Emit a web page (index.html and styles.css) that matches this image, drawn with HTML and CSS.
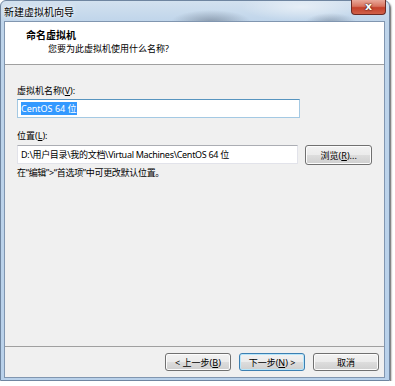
FILE: index.html
```html
<!DOCTYPE html>
<html lang="zh-CN">
<head>
  <meta charset="UTF-8" />
  <title>新建虚拟机向导</title>
  <link rel="stylesheet" href="styles.css">
</head>
<body>
  <div class="window">
    <div class="titlebar">
      <span class="title">新建虚拟机向导</span>
      <button class="close">x</button>
    </div>

    <div class="client">
      <div class="header">
        <div class="heading">命名虚拟机</div>
        <div class="subheading">您要为此虚拟机使用什么名称?</div>
      </div>

      <div class="content">
        <div class="label">虚拟机名称(<u>V</u>):</div>
        <div class="field focused"><span class="selected">CentOS 64 位</span></div>

        <div class="label second">位置(<u>L</u>):</div>
        <div class="row">
          <div class="field">D:\用户目录\我的文档\Virtual Machines\CentOS 64 位</div>
          <button class="btn browse">浏览(<u>R</u>)...</button>
        </div>
        <div class="note">在“编辑”>“首选项”中可更改默认位置。</div>
      </div>

      <div class="footer">
        <button class="btn">&lt; 上一步(<u>B</u>)</button>
        <button class="btn default">下一步(<u>N</u>) &gt;</button>
        <button class="btn">取消</button>
      </div>
    </div>
  </div>
</body>
</html>
```

FILE: styles.css
```css
body {
  margin: 0;
  background: #fff;
  font-family: 'Noto Sans', 'Noto Sans CJK SC', sans-serif;
  font-size: 9px;
  color: #000;
}
.window {
  box-sizing: border-box;
  width: 390px;
  height: 381px;
  padding: 0 4px 2px 3px;
  display: flex;
  flex-direction: column;
  border: 1px solid #6f85a0;
  border-radius: 6px 6px 0 0;
  background:
    radial-gradient(ellipse 40px 12px at 210px 21px, rgba(60, 70, 85, 0.4), transparent),
    radial-gradient(ellipse 26px 10px at 330px 22px, rgba(60, 70, 85, 0.35), transparent),
    radial-gradient(ellipse 60px 14px at 300px 6px, rgba(255, 255, 255, 0.5), transparent),
    linear-gradient(180deg, #d3e1ef 0, #bed4ea 22px, #b9d1ea 100%);
  box-shadow: 1px 2px 2px rgba(0, 0, 0, 0.65);
}
.titlebar {
  height: 20px;
  display: flex;
  align-items: flex-start;
}
.title {
  font-size: 10px;
  margin-top: 3px;
  text-shadow: 0 0 6px #fff, 0 0 3px #fff;
}
.close {
  margin-left: auto;
  margin-right: -1px;
  width: 35px;
  height: 15px;
  margin-top: -1px;
  padding: 0;
  border: 1px solid #6b2a24;
  border-top: none;
  border-radius: 0 0 4px 4px;
  background: linear-gradient(180deg, #e9a99a 0, #d8735f 45%, #c4402a 55%, #d0614a 100%);
  color: #fff;
  font-family: 'DejaVu Sans', sans-serif;
  font-weight: bold;
  font-size: 11px;
  line-height: 12px;
  text-shadow: 0 0 2px #3a1a14, 0 0 1px #3a1a14;
}
.client {
  flex: 1;
  display: flex;
  flex-direction: column;
  border: 1px solid #8196b0;
  background: #f0f0f0;
}
.header {
  height: 43px;
  box-sizing: border-box;
  padding: 7px 0 0 21px;
  background: #fff;
  border-bottom: 1px solid #a0a0a0;
}
.heading {
  font-size: 10px;
  font-weight: bold;
  line-height: 13px;
}
.subheading {
  line-height: 13px;
  margin-left: 22px;
}
.content {
  flex: 1;
  padding: 0 12px;
}
.label {
  margin-top: 19px;
  line-height: 14px;
}
.label.second {
  margin-top: 11px;
}
.field {
  box-sizing: border-box;
  width: 283px;
  height: 19px;
  margin-top: 1px;
  padding: 0 3px;
  line-height: 17px;
  letter-spacing: -0.3px;
  background: #fff;
  border: 1px solid #e2e3ea;
  border-top-color: #abadb3;
  white-space: nowrap;
}
.field.focused {
  border-color: #a4c9e3;
  border-top-color: #5794bf;
  letter-spacing: 0;
}
.selected {
  background: #3399ff;
  color: #fff;
}
.row {
  display: flex;
  gap: 7px;
  margin-top: 2px;
}
.row .field {
  margin-top: 0;
}
.note {
  margin-top: 1px;
  line-height: 14px;
  letter-spacing: -0.3px;
}
.btn {
  box-sizing: border-box;
  width: 66px;
  height: 18px;
  padding: 0;
  font-family: inherit;
  font-size: 9px;
  color: #000;
  border: 1px solid #707070;
  border-radius: 3px;
  background: linear-gradient(180deg, #f2f2f2 0, #ebebeb 50%, #dddddd 51%, #cfcfcf 100%);
  box-shadow: inset 0 0 0 1px #fcfcfc;
}
.btn.browse {
  width: 67px;
  height: 20px;
}
.btn.default {
  border-color: #3c7fb1;
  box-shadow: inset 0 0 0 1px #b7e6fb;
}
.footer {
  display: flex;
  justify-content: flex-end;
  gap: 8px;
  padding: 6px 5px 0 0;
  height: 31px;
  box-sizing: border-box;
  border-top: 1px solid #a0a0a0;
}
```
